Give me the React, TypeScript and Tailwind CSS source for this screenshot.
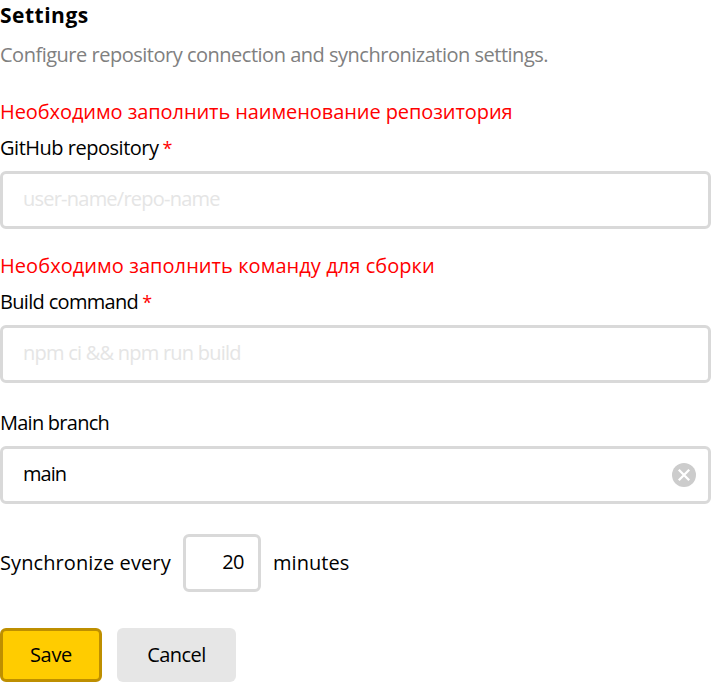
import { useState } from "react";

type FieldProps = {
  label: string;
  labelClass: string;
  error?: string;
  errorClass?: string;
  placeholder?: string;
  inputClass: string;
  initial?: string;
  required?: boolean;
};

function Field({ label, labelClass, error, errorClass, placeholder, inputClass, initial = "", required }: FieldProps) {
  const [value, setValue] = useState(initial);
  return (
    <div className="flex flex-col">
      {error && (
        <p className="mb-2 h-7 leading-7 text-[#ff0000]">
          <span className={errorClass}>{error}</span>
        </p>
      )}
      <label className="mb-[9px] flex h-7 gap-1 leading-7">
        <span className={labelClass}>{label}</span>
        {required && <span className="text-[18px] text-[#ff0000]">*</span>}
      </label>
      <div className="flex h-[58px] items-center rounded-md border-3 border-[#d9d9d9] pr-3 pl-5">
        <input
          className={inputClass}
          value={value}
          placeholder={placeholder}
          onChange={(e) => setValue(e.target.value)}
        />
        {value && (
          <button type="button" aria-label="Clear" onClick={() => setValue("")}>
            <svg width="24" height="24" viewBox="0 0 24 24" fill="none">
              <circle cx="12" cy="12" r="12" fill="#cccccc" />
              <path d="M6.8 6.8 17.2 17.2M17.2 6.8 6.8 17.2" stroke="#fff" strokeWidth="2.3" />
            </svg>
          </button>
        )}
      </div>
    </div>
  );
}

export default function App() {
  return (
    <form className="flex h-[682px] w-[711px] flex-col overflow-hidden bg-white pt-px font-['Open_Sans',sans-serif] text-[20px] whitespace-nowrap text-black">
      <h1 className="h-7 text-[21px] leading-7 font-bold">
        <span className="tracking-[0.5px]">Settings</span>
      </h1>
      <p className="mt-[12px] mb-[29px] h-7 leading-7 text-[#808080]">
        <span className="tracking-[-0.49px]">Configure repository connection and synchronization settings.</span>
      </p>
      <Field
        label="GitHub repository"
        labelClass="tracking-[-0.48px]"
        error="Необходимо заполнить наименование репозитория"
        errorClass="tracking-[-0.08px]"
        placeholder="user-name/repo-name"
        inputClass="min-w-0 grow bg-transparent pb-0.5 tracking-[-0.77px] outline-none placeholder:text-[#e5e5e5]"
        required
      />
      <div className="mt-[23px]">
        <Field
          label="Build command"
          labelClass="tracking-[-0.68px]"
          error="Необходимо заполнить команду для сборки"
          errorClass="tracking-[0.06px]"
          placeholder="npm ci && npm run build"
          inputClass="min-w-0 grow bg-transparent pb-0.5 tracking-[-0.76px] outline-none placeholder:text-[#e5e5e5]"
          required
        />
      </div>
      <div className="mt-[26px]">
        <Field
          label="Main branch"
          labelClass="tracking-[-0.75px]"
          initial="main"
          inputClass="min-w-0 grow bg-transparent pb-0.5 tracking-[-1px] outline-none"
        />
      </div>
      <div className="mt-[30px] flex h-[58px] items-center">
        <span className="w-[183px] tracking-[0.1px]">Synchronize every</span>
        <input
          className="h-[58px] w-[78px] rounded-md border-3 border-[#d9d9d9] pr-[14px] pb-[3px] text-right tracking-[-0.5px] outline-none"
          defaultValue="20"
        />
        <span className="ml-3 tracking-[0.04px]">minutes</span>
      </div>
      <div className="mt-9 flex gap-[15px]">
        <button type="submit" className="h-[54px] w-[102px] rounded-md border-3 border-[#be8f00] bg-[#ffcc00] tracking-[-0.3px]">
          Save
        </button>
        <button type="button" className="h-[54px] w-[119px] rounded-md bg-[#e6e6e6] tracking-[-0.55px]">
          Cancel
        </button>
      </div>
    </form>
  );
}
